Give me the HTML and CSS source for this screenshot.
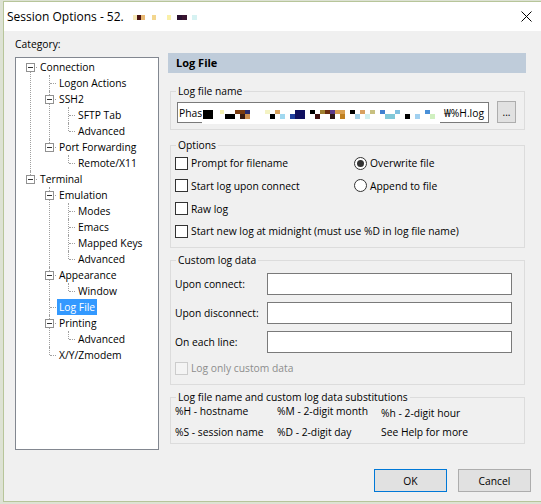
FILE: index.html
```html
<!DOCTYPE html>
<html lang="en">
<head>
    <meta charset="UTF-8">
    <meta name="viewport" content="width=device-width, initial-scale=1.0">
    <title>Session Options</title>
    <link rel="stylesheet" href="styles.css">
</head>
<body>
    <div class="window">
        <div class="titlebar">
            <span class="title">Session Options - 52.</span>
            <span class="title-mask"></span>
            <span class="close-btn">
                <svg width="11" height="11" viewBox="0 0 11 11">
                    <path d="M0.5 0.5L10.5 10.5M10.5 0.5L0.5 10.5" stroke="#000" stroke-width="1" fill="none"/>
                </svg>
            </span>
        </div>

        <div class="main">
            <!-- Category tree -->
            <div class="sidebar">
                <div class="category-label">Category:</div>
                <div class="tree-box">
                    <ul class="tree">
                        <li><span class="exp"></span><span class="label">Connection</span>
                            <ul>
                                <li><span class="label">Logon Actions</span></li>
                                <li><span class="exp"></span><span class="label">SSH2</span>
                                    <ul>
                                        <li><span class="label">SFTP Tab</span></li>
                                        <li><span class="label">Advanced</span></li>
                                    </ul>
                                </li>
                                <li><span class="exp"></span><span class="label">Port Forwarding</span>
                                    <ul>
                                        <li><span class="label">Remote/X11</span></li>
                                    </ul>
                                </li>
                            </ul>
                        </li>
                        <li><span class="exp"></span><span class="label">Terminal</span>
                            <ul>
                                <li><span class="exp"></span><span class="label">Emulation</span>
                                    <ul>
                                        <li><span class="label">Modes</span></li>
                                        <li><span class="label">Emacs</span></li>
                                        <li><span class="label">Mapped Keys</span></li>
                                        <li><span class="label">Advanced</span></li>
                                    </ul>
                                </li>
                                <li><span class="exp"></span><span class="label">Appearance</span>
                                    <ul>
                                        <li><span class="label">Window</span></li>
                                    </ul>
                                </li>
                                <li><span class="label selected">Log File</span></li>
                                <li><span class="exp"></span><span class="label">Printing</span>
                                    <ul>
                                        <li><span class="label">Advanced</span></li>
                                    </ul>
                                </li>
                                <li><span class="label">X/Y/Zmodem</span></li>
                            </ul>
                        </li>
                    </ul>
                </div>
            </div>

            <!-- Log File page -->
            <div class="panel">
                <div class="panel-header">Log File</div>

                <fieldset class="group name-group">
                    <legend>Log file name</legend>
                    <div class="name-row">
                        <div class="textbox filename">
                            <span class="fn-start">Phas</span>
                            <span class="fn-end">&#8361;%H.log</span>
                        </div>
                        <button class="browse-btn">...</button>
                        <div class="name-mask">
                            <div class="mask-top"></div>
                            <div class="mask-bottom"></div>
                        </div>
                    </div>
                </fieldset>

                <fieldset class="group options-group">
                    <legend>Options</legend>
                    <div class="options-grid">
                        <div class="opt"><span class="check"></span>Prompt for filename</div>
                        <div class="opt"><span class="radio checked"></span>Overwrite file</div>
                        <div class="opt"><span class="check"></span>Start log upon connect</div>
                        <div class="opt"><span class="radio"></span>Append to file</div>
                        <div class="opt"><span class="check"></span>Raw log</div>
                        <div class="opt wide"><span class="check"></span>Start new log at midnight (must use %D in log file name)</div>
                    </div>
                </fieldset>

                <fieldset class="group custom-group">
                    <legend>Custom log data</legend>
                    <div class="custom-grid">
                        <span>Upon connect:</span><span class="textbox"></span>
                        <span>Upon disconnect:</span><span class="textbox"></span>
                        <span>On each line:</span><span class="textbox"></span>
                    </div>
                    <div class="opt disabled"><span class="check"></span>Log only custom data</div>
                </fieldset>

                <fieldset class="group subs-group">
                    <legend>Log file name and custom log data substitutions</legend>
                    <div class="subs-grid">
                        <span>%H - hostname</span>
                        <span>%M - 2-digit month</span>
                        <span class="low">%h - 2-digit hour</span>
                        <span>%S - session name</span>
                        <span>%D - 2-digit day</span>
                        <span>See Help for more</span>
                    </div>
                </fieldset>
            </div>
        </div>

        <div class="footer">
            <button class="btn btn-default">OK</button>
            <button class="btn">Cancel</button>
        </div>
    </div>
</body>
</html>
```

FILE: styles.css
```css
/* Reset */
* {
    margin: 0;
    padding: 0;
    box-sizing: border-box;
}

body {
    font-family: "Open Sans", "Noto Sans", sans-serif;
    font-size: 10.3px;
    color: #000;
    background-color: #dde2d4;
    width: 541px;
    height: 504px;
    overflow: hidden;
}

/* Window frame */
.window {
    margin: 1px 0 0 3px;
    height: 501px;
    border: 1px solid #b7c59a;
    border-right: none;
    background-color: #f0f0f0;
    overflow: hidden;
}

.titlebar {
    display: flex;
    align-items: center;
    height: 29px;
    padding-left: 3px;
    background-color: #fff;
}

.title {
    font-size: 12px;
    line-height: 16px;
}

.title-mask {
    width: 64px;
    height: 5px;
    margin-left: 9px;
    margin-top: 1px;
    background: linear-gradient(to right,
        #f6e8b6 0 4px, #4a1212 4px 8px, #e8b872 8px 12px, transparent 12px 19px,
        #f3d68e 19px 23px, transparent 23px 34px, #faf0a8 34px 38px, transparent 38px 44px,
        #2a1030 44px 49px, #3a1530 49px 54px, transparent 54px 59px, #d6f2f2 59px 64px);
}

.close-btn {
    display: flex;
    align-items: center;
    justify-content: center;
    width: 30px;
    height: 29px;
    margin-left: auto;
}

/* Main area */
.main {
    display: flex;
    height: 419px;
    padding-left: 11px;
}

.sidebar {
    width: 144px;
}

.category-label {
    margin-top: 6px;
    line-height: 14px;
}

.tree-box {
    margin-top: 6px;
    width: 144px;
    height: 393px;
    padding: 1px 0 0 9px;
    background-color: #fff;
    border: 1px solid #828790;
    overflow: hidden;
}

/* Tree */
.tree,
.tree ul {
    list-style: none;
}

.tree ul {
    margin-left: 6px;
}

.tree li {
    position: relative;
    padding-left: 13px;
    line-height: 16px;
}

    .tree li::before {
        content: "";
        position: absolute;
        left: 5px;
        top: 0;
        bottom: 0;
        border-left: 1px dotted #a0a0a0;
    }

    .tree li:last-child::before {
        bottom: auto;
        height: 8px;
    }

.tree > li:first-child::before {
    top: 8px;
    bottom: 0;
    height: auto;
}

.tree li::after {
    content: "";
    position: absolute;
    left: 6px;
    top: 8px;
    width: 6px;
    border-top: 1px dotted #a0a0a0;
}

.exp {
    position: absolute;
    left: 1px;
    top: 4px;
    width: 9px;
    height: 9px;
    border: 1px solid #919191;
    background-color: #fff;
    z-index: 1;
}

    .exp::after {
        content: "";
        position: absolute;
        left: 1px;
        top: 3px;
        width: 5px;
        height: 1px;
        background-color: #333;
    }

.label {
    display: inline-block;
    height: 16px;
    padding: 0 2px;
    vertical-align: top;
    white-space: nowrap;
}

    .label.selected {
        background-color: #3399ff;
        color: #fff;
    }

/* Right panel */
.panel {
    width: 358px;
    margin-left: 9px;
    margin-top: 22px;
}

.panel-header {
    height: 20px;
    line-height: 20px;
    padding-left: 8px;
    background-color: #bfccda;
    font-size: 11px;
    font-weight: bold;
}

.group {
    width: 355px;
    margin-left: 2px;
    padding: 0 4px;
    border: 1px solid #dcdcdc;
    min-inline-size: 0;
}

    .group legend {
        margin-left: 1px;
        padding: 0 2px;
        line-height: 14px;
    }

.name-group {
    margin-top: 11px;
    padding-bottom: 6px;
}

.name-row {
    position: relative;
    display: flex;
    align-items: center;
    gap: 8px;
    margin-top: 4px;
    padding-left: 2px;
}

.textbox {
    display: block;
    height: 22px;
    background-color: #fff;
    border: 1px solid #7a7a7a;
}

    .textbox.filename {
        display: flex;
        align-items: center;
        justify-content: space-between;
        width: 312px;
        height: 21px;
        padding: 0 4px 0 1px;
        overflow: hidden;
        white-space: nowrap;
    }

.browse-btn {
    width: 19px;
    height: 22px;
    margin-top: -1px;
    font-family: inherit;
    font-size: 10px;
    line-height: 18px;
    background-color: #e1e1e1;
    border: 1px solid #adadad;
}

/* redacted part of the path */
.name-mask {
    position: absolute;
    left: 27px;
    top: 1px;
    width: 238px;
    height: 21px;
    padding-top: 7px;
    background-color: #fff;
}

.mask-top {
    height: 4px;
    background: linear-gradient(to right,
        transparent 0 1px, #000 1px 11px, transparent 11px 18px, #f3f0b0 18px 22px,
        transparent 22px 33px, #7a3b10 33px 43px, #2b2b6b 43px 48px, transparent 48px 63px,
        #f4f3c4 63px 68px, transparent 68px 73px, #d9a15b 73px 78px, transparent 78px 93px,
        #101060 93px 103px, transparent 103px 108px, #000 108px 113px, transparent 113px 118px,
        #a08030 118px 123px, #6a2c10 123px 128px, #5b3a8b 128px 133px, #d9a050 133px 143px,
        transparent 143px 148px, #000 148px 153px, transparent 153px 158px, #d8a060 158px 163px,
        transparent 163px 168px, #c8c080 168px 173px, transparent 173px 178px, #4080d0 178px 183px,
        transparent 183px 193px, #80c0e0 193px 198px, transparent 198px 223px, #4a90d8 223px 228px,
        transparent 228px);
}

.mask-bottom {
    height: 5px;
    background: linear-gradient(to right,
        transparent 0 1px, #000 1px 11px, transparent 11px 23px, #000 23px 33px,
        transparent 33px 38px, #3a1a10 38px 43px, #d09050 43px 48px, transparent 48px 68px,
        #000 68px 73px, transparent 73px 78px, #a0d8f0 78px 83px, transparent 83px 88px,
        #2040a0 88px 93px, #101060 93px 103px, transparent 103px 113px, #401010 113px 118px,
        transparent 118px 128px, #301818 128px 133px, transparent 133px 138px, #c08020 138px 143px,
        transparent 143px 153px, #a0d0e8 153px 158px, transparent 158px 163px, #d0f0f0 163px 168px,
        transparent 168px 183px, #80c8d8 183px 193px, transparent 193px 203px, #000 203px 208px,
        transparent 208px 213px, #a0d0f0 213px 218px, transparent 218px 228px, #d0f0c0 228px 233px,
        transparent 233px);
}

/* Options */
.options-group {
    margin-top: 8px;
    padding-bottom: 5px;
}

.options-grid {
    display: grid;
    grid-template-columns: 179px 1fr;
    grid-template-rows: 22px 23px 23px 22px;
}

.opt {
    display: flex;
    align-items: center;
    white-space: nowrap;
}

    .opt.wide {
        grid-column: 1 / -1;
    }

.check {
    width: 13px;
    height: 13px;
    margin-right: 3px;
    background-color: #fff;
    border: 1px solid #333;
}

.radio {
    position: relative;
    width: 13px;
    height: 13px;
    margin-right: 3px;
    background-color: #fff;
    border: 1px solid #333;
    border-radius: 50%;
}

    .radio.checked::after {
        content: "";
        position: absolute;
        left: 2px;
        top: 2px;
        width: 7px;
        height: 7px;
        border-radius: 50%;
        background-color: #333;
    }

.opt.disabled {
    color: #8d8d8d;
    height: 16px;
    margin-top: 7px;
}

    .opt.disabled .check {
        border-color: #cccccc;
        background-color: #f4f4f4;
    }

/* Custom log data */
.custom-group {
    margin-top: 5px;
    padding-top: 6px;
    padding-bottom: 8px;
}

.custom-grid {
    display: grid;
    grid-template-columns: 92px 245px;
    grid-auto-rows: 22px;
    row-gap: 7px;
    align-items: center;
}

/* Substitutions */
.subs-group {
    margin-top: 5px;
    padding-bottom: 4px;
}

.subs-grid {
    display: grid;
    grid-template-columns: 102px 104px auto;
    grid-auto-rows: 14px;
    row-gap: 7px;
    line-height: 14px;
    white-space: nowrap;
}

    .subs-grid .low {
        margin-top: 2px;
    }

/* Buttons */
.footer {
    display: flex;
    justify-content: flex-end;
    gap: 11px;
    margin-top: 19px;
    padding-right: 10px;
}

.btn {
    width: 73px;
    height: 23px;
    font-family: inherit;
    font-size: 10.3px;
    background-color: #e1e1e1;
    border: 1px solid #adadad;
}

.btn-default {
    border-color: #0078d7;
}
```
